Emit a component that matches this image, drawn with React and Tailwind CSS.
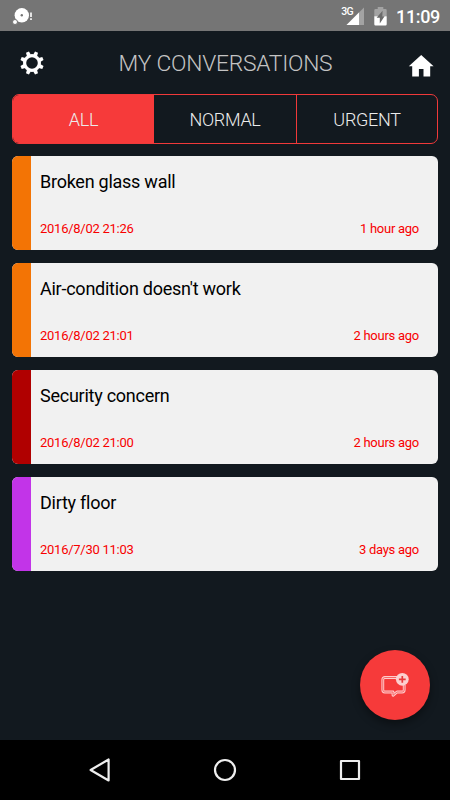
import React from 'react';

const TABS = [
  { label: 'ALL', className: 'w-[141px] bg-[#f63a3a]' },
  { label: 'NORMAL', className: 'w-[142px]' },
  { label: 'URGENT', className: 'flex-1 border-l border-[#f0393a]' },
];

const CONVERSATIONS = [
  { title: 'Broken glass wall', date: '2016/8/02 21:26', ago: '1 hour ago', color: 'bg-[#f37405]' },
  { title: "Air-condition doesn't work", date: '2016/8/02 21:01', ago: '2 hours ago', color: 'bg-[#f37405]' },
  { title: 'Security concern', date: '2016/8/02 21:00', ago: '2 hours ago', color: 'bg-[#b00000]' },
  { title: 'Dirty floor', date: '2016/7/30 11:03', ago: '3 days ago', color: 'bg-[#c234e8]' },
];

const GEAR_TEETH = [22.5, 67.5, 112.5, 157.5, 202.5, 247.5, 292.5, 337.5];

function GearIcon() {
  return (
    <svg width="24" height="24" viewBox="-12 -12 24 24" fill="#fff">
      <circle r="7.4" fill="none" stroke="#fff" strokeWidth="3.2" />
      {GEAR_TEETH.map((angle) => (
        <path key={angle} d="M-2.1 -8 L-1.6 -11.8 H1.6 L2.1 -8 Z" transform={`rotate(${angle})`} />
      ))}
    </svg>
  );
}

function HomeIcon() {
  return (
    <svg width="26" height="24" viewBox="0 0 26 24" fill="#fff">
      <path d="M13.2 1 L25.6 12.3 H22.2 V22.6 H15.5 V15 H10.9 V22.6 H4.2 V12.3 H0.8 Z" />
    </svg>
  );
}

function StatusBar() {
  return (
    <div className="flex h-[31px] shrink-0 items-center justify-between bg-[#757575] pr-[10px] pl-3 text-white">
      <svg width="22" height="20" viewBox="0 0 22 20" fill="#fff">
        <circle cx="9.8" cy="9.3" r="7.2" />
        <circle cx="9.8" cy="9.3" r="1.2" fill="#757575" />
        <circle cx="3" cy="16" r="2.5" stroke="#757575" strokeWidth="1" />
        <path d="M18.2 6.5h1.6v4.6h-1.6zM18.2 12.3h1.6v1.6h-1.6z" />
      </svg>
      <div className="flex items-center">
        <span className="-mr-[7px] mb-[7px] text-[10.5px] leading-none font-medium tracking-[-0.6px]">3G</span>
        <svg width="18" height="20" viewBox="0 0 18 20">
          <path d="M18 1.5V19H.5Z" fill="#a3a3a3" />
          <path d="M13 6.5V19H.5Z" fill="#fff" />
        </svg>
        <svg className="ml-[10px]" width="13" height="20" viewBox="0 0 13 20">
          <path d="M3.7 1h5.6v2h2.2a1.2 1.2 0 0 1 1.2 1.2V10.3H.3V4.2A1.2 1.2 0 0 1 1.5 3h2.2z" fill="#a3a3a3" />
          <path d="M.3 10.3h12.4v8a1.2 1.2 0 0 1-1.2 1.2H1.5a1.2 1.2 0 0 1-1.2-1.2z" fill="#fff" />
          <path d="M8.6 4.8L2.6 11.8h3.2v5.6L10.6 10.3H8.3z" fill="#6a6a6a" />
        </svg>
        <span className="mt-[2px] ml-[9px] text-[18px] leading-none font-medium tracking-[-0.35px]">11:09</span>
      </div>
    </div>
  );
}

function Header() {
  return (
    <header className="flex h-[63px] shrink-0 items-center justify-between pr-4 pl-5">
      <GearIcon />
      <h1 className="mt-[4px] mr-px text-[22.8px] leading-none font-light tracking-[-0.25px] text-[#c4c4c4]">
        MY CONVERSATIONS
      </h1>
      <div className="mt-[7px]">
        <HomeIcon />
      </div>
    </header>
  );
}

function ConversationCard({ title, date, ago, color }) {
  return (
    <article className="flex h-[94px] overflow-hidden rounded-[6px] bg-[#f1f1f1]">
      <div className={`w-[19px] shrink-0 ${color}`} />
      <div className="flex flex-1 flex-col justify-between pt-[14px] pr-[19px] pb-[12px] pl-[9px]">
        <h2 className="text-[18px] leading-6 tracking-[-0.25px] text-black">{title}</h2>
        <div className="flex justify-between text-[13px] leading-[18px] tracking-[-0.26px] text-[#f80000]">
          <span>{date}</span>
          <span>{ago}</span>
        </div>
      </div>
    </article>
  );
}

function NavBar() {
  return (
    <nav className="flex h-[60px] shrink-0 items-center justify-center gap-[101px] bg-black">
      <svg width="24" height="26" viewBox="0 0 24 26" fill="none" stroke="#eee" strokeWidth="2.2" strokeLinejoin="round">
        <path d="M20.6 2.5V23.5L2.6 13Z" />
      </svg>
      <svg width="24" height="24" viewBox="0 0 24 24" fill="none" stroke="#eee" strokeWidth="2.2">
        <circle cx="12" cy="12" r="10" />
      </svg>
      <svg width="24" height="24" viewBox="0 0 24 24" fill="none" stroke="#eee" strokeWidth="2.2" strokeLinejoin="round">
        <path d="M3 3h18v18H3z" />
      </svg>
    </nav>
  );
}

export default function App() {
  return (
    <div className="relative flex h-[800px] w-[450px] flex-col overflow-hidden bg-[#12191f] font-['Roboto',sans-serif]">
      <StatusBar />
      <Header />
      <main className="flex flex-1 flex-col px-3">
        <div className="flex h-[50px] w-[426px] shrink-0 overflow-hidden rounded-[7px] border border-[#f0393a]">
          {TABS.map((tab) => (
            <button
              key={tab.label}
              className={`flex items-center justify-center pt-px text-[18px] font-light tracking-[-0.3px] text-[#ececec] ${tab.className}`}
            >
              {tab.label}
            </button>
          ))}
        </div>
        <div className="mt-3 flex flex-col gap-[13px]">
          {CONVERSATIONS.map((item) => (
            <ConversationCard key={item.date} {...item} />
          ))}
        </div>
      </main>
      <NavBar />

      <button className="absolute right-5 bottom-20 flex h-[70px] w-[70px] items-center justify-center rounded-full bg-[#f63a3a] shadow-[0_4px_8px_rgba(0,0,0,0.4)]">
        <svg width="30" height="26" viewBox="0 0 30 26" fill="none">
          <path
            d="M19 5.5H4.8a2 2 0 0 0-2 2V18a2 2 0 0 0 2 2h8.2v3.3l4-3.3h5.2a2 2 0 0 0 2-2V13"
            stroke="#fcc"
            strokeWidth="2.8"
            strokeLinejoin="round"
          />
          <path
            d="M19 5.5H4.8a2 2 0 0 0-2 2V18a2 2 0 0 0 2 2h8.2v3.3l4-3.3h5.2a2 2 0 0 0 2-2V13"
            stroke="#f65a5a"
            strokeWidth="0.9"
            strokeLinejoin="round"
          />
          <circle cx="22.3" cy="7.3" r="6.4" fill="#fcd0d0" />
          <path d="M22.3 3.9v6.8M18.9 7.3h6.8" stroke="#e8393b" strokeWidth="1.7" />
        </svg>
      </button>
    </div>
  );
}
